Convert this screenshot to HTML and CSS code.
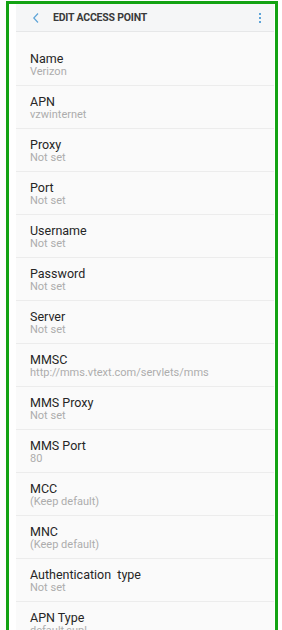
FILE: index.html
```html
<!DOCTYPE html>
<html>
<head>
<meta charset="utf-8">
<link rel="stylesheet" href="styles.css">
</head>
<body>
<div class="frame">
  <div class="screen">
    <header class="appbar">
      <svg class="back" width="8" height="12" viewBox="0 0 8 12"><path d="M6 1.5 L1.8 6 L6 10.5" fill="none" stroke="#5fa5d8" stroke-width="1.2"/></svg>
      <h1 class="title">EDIT ACCESS POINT</h1>
      <span class="more"><i></i><i></i><i></i></span>
    </header>
    <ul class="list">
      <li class="row"><div class="label">Name</div><div class="value">Verizon</div></li>
      <li class="row"><div class="label">APN</div><div class="value">vzwinternet</div></li>
      <li class="row"><div class="label">Proxy</div><div class="value">Not set</div></li>
      <li class="row"><div class="label">Port</div><div class="value">Not set</div></li>
      <li class="row"><div class="label">Username</div><div class="value">Not set</div></li>
      <li class="row"><div class="label">Password</div><div class="value">Not set</div></li>
      <li class="row"><div class="label">Server</div><div class="value">Not set</div></li>
      <li class="row"><div class="label">MMSC</div><div class="value">http://mms.vtext.com/servlets/mms</div></li>
      <li class="row"><div class="label">MMS Proxy</div><div class="value">Not set</div></li>
      <li class="row"><div class="label">MMS Port</div><div class="value">80</div></li>
      <li class="row"><div class="label">MCC</div><div class="value">(Keep default)</div></li>
      <li class="row"><div class="label">MNC</div><div class="value">(Keep default)</div></li>
      <li class="row"><div class="label">Authentication&nbsp; type</div><div class="value">Not set</div></li>
      <li class="row"><div class="label">APN Type</div><div class="value">default,supl</div></li>
    </ul>
  </div>
</div>
</body>
</html>
```
FILE: styles.css
```css
html, body {
  margin: 0;
  padding: 0;
  background: #ffffff;
  height: 630px;
  overflow: hidden;
}
body {
  font-family: Roboto, "Noto Sans", "Liberation Sans", sans-serif;
}
.frame {
  margin: 1px 0 0 6px;
  height: 640px;
  border: 3px solid #13a313;
  border-bottom: none;
  padding: 0 1px 0 7px;
  box-sizing: border-box;
  width: 272px;
}
.screen {
  background: #fafafa;
  height: 100%;
}
.appbar {
  display: flex;
  align-items: center;
  height: 27px;
  background: #f5f6f7;
  border-bottom: 1px solid #e6e7e8;
  padding: 0 0 0 16px;
}
.back {
  display: block;
  flex: none;
}
.title {
  margin: 0 0 0 13px;
  font-size: 10.5px;
  font-weight: 700;
  color: #3a3a3a;
  letter-spacing: -0.2px;
  flex: 1;
  line-height: 27px;
}
.more {
  display: flex;
  flex-direction: column;
  gap: 2px;
  margin-right: 13px;
}
.more i {
  display: block;
  width: 2px;
  height: 2px;
  background: #5fa5d8;
}
.list {
  list-style: none;
  margin: 0;
  padding: 11px 0 0 0;
}
.row {
  padding: 9px 0 7px 14px;
  border-bottom: 1px solid #ececec;
}
.label {
  font-size: 12.5px;
  line-height: 14px;
  color: #262626;
}
.value {
  font-size: 11px;
  line-height: 12px;
  color: #adadad;
}
```
